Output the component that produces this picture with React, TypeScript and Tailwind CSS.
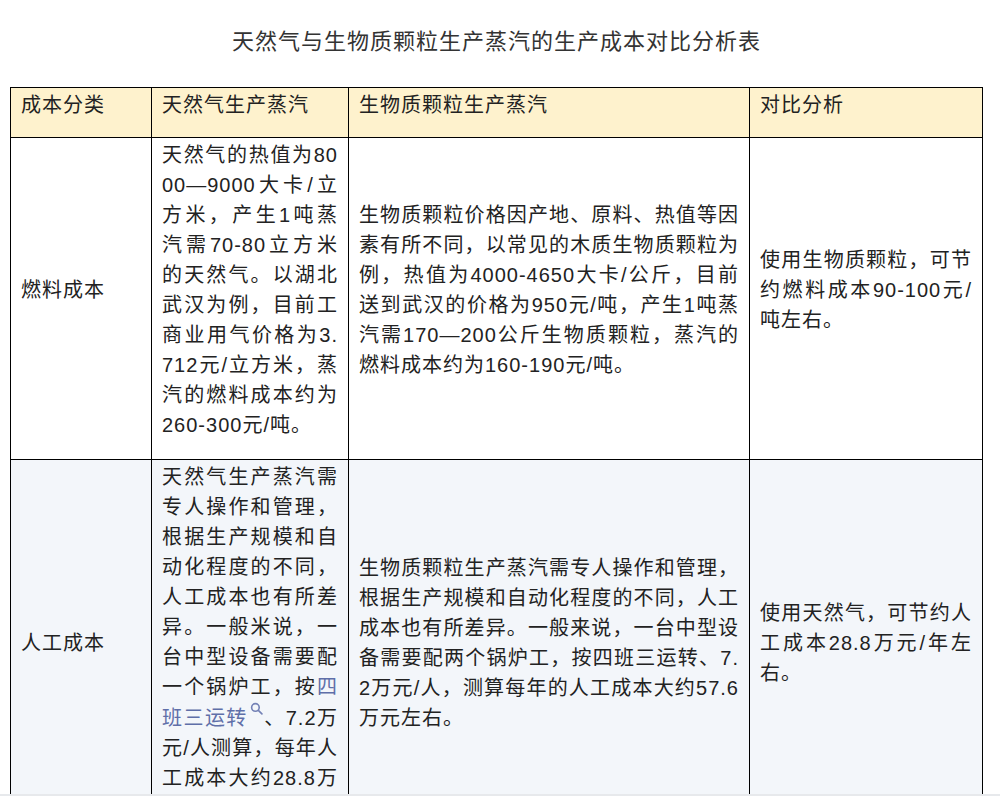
import type { ReactNode } from 'react'

const SearchMark = () => (
  <svg viewBox="0 0 12 12" className="inline-block w-[13px] h-[13px] align-[0.5em] ml-[2px] mr-[1px]" fill="none" stroke="#7482b6" strokeWidth="1.5">
    <circle cx="5" cy="5" r="3.5" />
    <path d="M7.7 7.7 L11 11" strokeLinecap="round" />
  </svg>
)

const Cell = ({ children, head }: { children: ReactNode; head?: boolean }) => (
  <div
    className={
      'flex flex-col justify-center border-b border-r border-black px-[10px] pt-[2px] ' +
      (head ? 'pb-[17px]' : 'pb-[19px]')
    }
  >
    <p className="text-justify break-all">{children}</p>
  </div>
)

const App = () => {
  return (
    <div className="h-[796px] overflow-hidden flex flex-col bg-white text-[#222] font-['Liberation_Sans','Noto_Sans_CJK_SC',sans-serif] text-[20px] leading-[30px] tracking-[1px]">
      <div className="flex-1 min-h-0 overflow-hidden px-[10px]">
        {/* TITLE */}
        <h1 className="w-[973px] pt-[27px] pb-[30px] text-center text-[22px] leading-[30px] text-[#333]">
          天然气与生物质颗粒生产蒸汽的生产成本对比分析表
        </h1>

        {/* TABLE */}
        <div className="grid w-[973px] grid-cols-[141px_197px_401px_233px] border-l border-t border-black">
          <div className="col-span-4 grid grid-cols-subgrid bg-[#fef2cd]">
            <Cell head>成本分类</Cell>
            <Cell head>天然气生产蒸汽</Cell>
            <Cell head>生物质颗粒生产蒸汽</Cell>
            <Cell head>对比分析</Cell>
          </div>

          <div className="col-span-4 grid grid-cols-subgrid bg-white">
            <Cell>燃料成本</Cell>
            <Cell>
              天然气的热值为8000—9000大卡/立方米，产生1吨蒸汽需70-80立方米的天然气。以湖北武汉为例，目前工商业用气价格为3.712元/立方米，蒸汽的燃料成本约为260-300元/吨。
            </Cell>
            <Cell>
              生物质颗粒价格因产地、原料、热值等因素有所不同，以常见的木质生物质颗粒为例，热值为4000-4650大卡/公斤，目前送到武汉的价格为950元/吨，产生1吨蒸汽需170—200公斤生物质颗粒，蒸汽的燃料成本约为160-190元/吨。
            </Cell>
            <Cell>使用生物质颗粒，可节约燃料成本90-100元/吨左右。</Cell>
          </div>

          <div className="col-span-4 grid grid-cols-subgrid bg-[#f3f6fa]">
            <Cell>人工成本</Cell>
            <Cell>
              天然气生产蒸汽需专人操作和管理，根据生产规模和自动化程度的不同，人工成本也有所差异。一般米说，一台中型设备需要配一个锅炉工，按
              <span className="text-[#5f6fa9]">四班三运转</span>
              <SearchMark />
              、7.2万元/人测算，每年人工成本大约28.8万元左右。
            </Cell>
            <Cell>
              生物质颗粒生产蒸汽需专人操作和管理，根据生产规模和自动化程度的不同，人工成本也有所差异。一般来说，一台中型设备需要配两个锅炉工，按四班三运转、7.2万元/人，测算每年的人工成本大约57.6万元左右。
            </Cell>
            <Cell>使用天然气，可节约人工成本28.8万元/年左右。</Cell>
          </div>
        </div>
      </div>
      <div className="h-[2px] shrink-0 bg-[#e7e9ec]" />
    </div>
  )
}

export default App
